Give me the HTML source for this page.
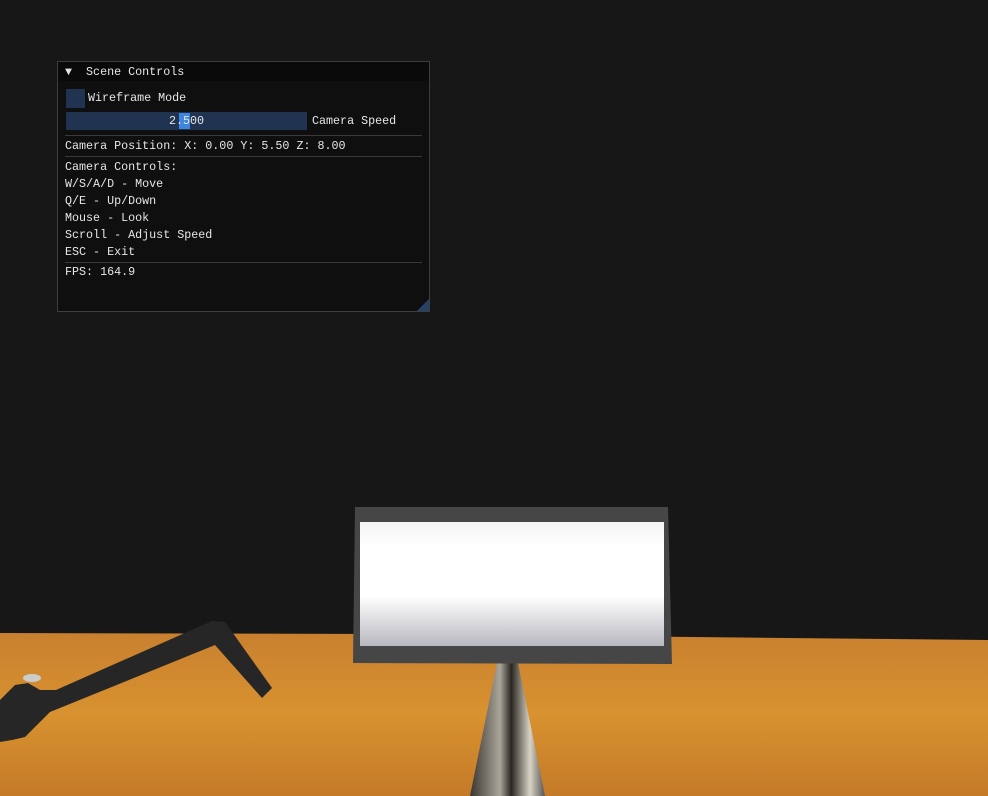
<!DOCTYPE html><html><head><style>
body{margin:0;width:988px;height:796px;background:#171717;position:relative;overflow:hidden;font-family:"Liberation Mono",monospace;font-size:11.7px;color:#e6e6e6}
.p{position:absolute;left:57px;top:61px;width:371px;height:249px;background:#0f0f0f;border:1px solid #3d3d3d}
.t{position:absolute;left:0;top:0;width:371px;height:19px;background:#0a0a0a}
.a{position:absolute;white-space:pre;line-height:14px}
.s{position:absolute;left:7px;width:357px;height:1px;background:#3a3a3a}
</style></head><body>
<svg width="988" height="796" style="position:absolute;left:0;top:0">
<defs><linearGradient id="w" x1="0" y1="0" x2="0" y2="1"><stop offset="0" stop-color="#c8802f"/><stop offset=".5" stop-color="#d8922f"/><stop offset="1" stop-color="#c47a28"/></linearGradient>
<linearGradient id="c" x1="0" x2="1"><stop offset="0" stop-color="#3a3630"/><stop offset=".4" stop-color="#aaa59a"/><stop offset=".55" stop-color="#2a2722"/><stop offset=".8" stop-color="#d8d3c4"/><stop offset="1" stop-color="#555"/></linearGradient>
<linearGradient id="sc" x1="0" y1="0" x2="0" y2="1"><stop offset="0" stop-color="#f4f4f4"/><stop offset=".2" stop-color="#fff"/><stop offset=".6" stop-color="#fff"/><stop offset="1" stop-color="#b8b8c0"/></linearGradient></defs>
<polygon points="0,633 400,634 988,640 988,796 0,796" fill="url(#w)"/>
<polygon points="0,700 15,685 28,683 40,690 56,690 212,621 225,622 272,688 262,698 215,645 50,712 25,737 12,740 0,742" fill="#262626"/>
<ellipse cx="32" cy="678" rx="9" ry="4" fill="#ccc"/>
<polygon points="497,663 518,663 545,796 470,796" fill="url(#c)"/>
<polygon points="355,507 668,507 672,664 353,663" fill="#464646"/>
<polygon points="360,522 664,522 664,646 360,646" fill="url(#sc)"/>
</svg>
<div class="p"><div class="t"></div>
<div class="a" style="left:7px;top:3px">▼  Scene Controls</div>
<div style="position:absolute;left:8px;top:27px;width:19px;height:19px;background:#203350"></div>
<div class="a" style="left:30px;top:29px">Wireframe Mode</div>
<div style="position:absolute;left:8px;top:50px;width:241px;height:18px;background:#203350"></div>
<div style="position:absolute;left:121px;top:51px;width:11px;height:16px;background:#3d85e0"></div>
<div class="a" style="left:111px;top:52px">2.500</div>
<div class="a" style="left:254px;top:52px">Camera Speed</div>
<div class="s" style="top:73px"></div>
<div class="a" style="left:7px;top:77px">Camera Position: X: 0.00 Y: 5.50 Z: 8.00</div>
<div class="s" style="top:94px"></div>
<div class="a" style="left:7px;top:98px">Camera Controls:</div>
<div class="a" style="left:7px;top:115px">W/S/A/D - Move</div>
<div class="a" style="left:7px;top:132px">Q/E - Up/Down</div>
<div class="a" style="left:7px;top:149px">Mouse - Look</div>
<div class="a" style="left:7px;top:166px">Scroll - Adjust Speed</div>
<div class="a" style="left:7px;top:183px">ESC - Exit</div>
<div class="s" style="top:200px"></div>
<div class="a" style="left:7px;top:203px">FPS: 164.9</div>
<svg style="position:absolute;right:0;bottom:0" width="12" height="12"><polygon points="12,0 12,12 0,12" fill="#26426b"/></svg>
</div>
</body></html>
